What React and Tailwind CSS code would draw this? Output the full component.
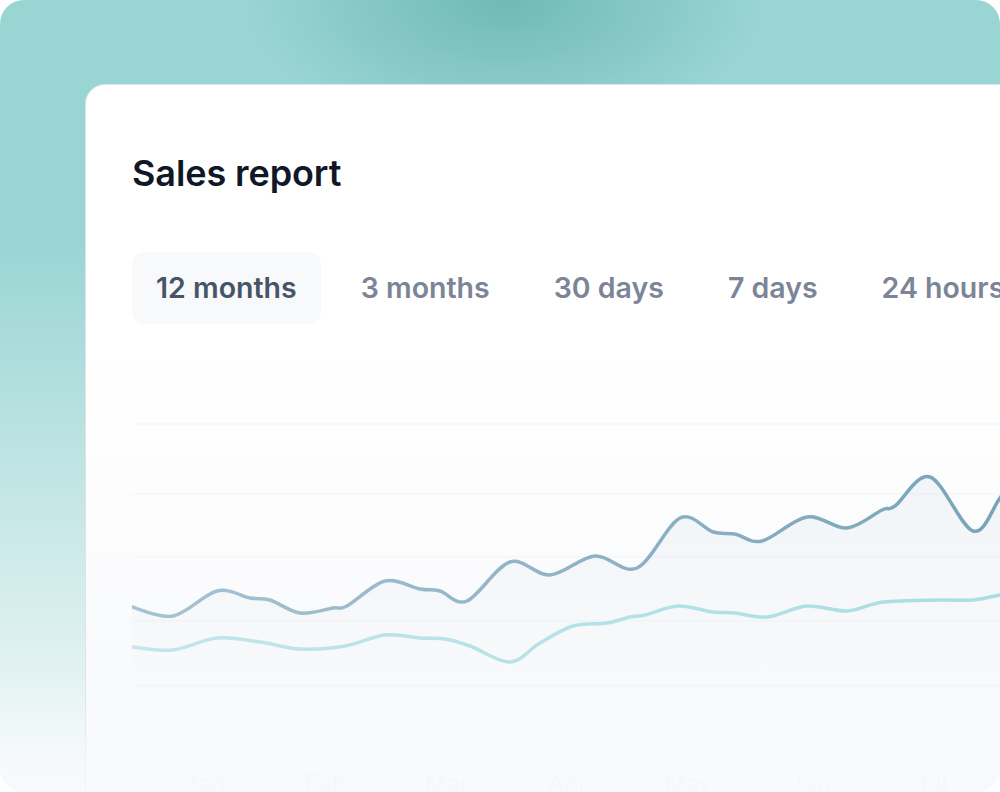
import React from 'react';

const darkPts = [
  [132, 607], [173, 616], [217, 591], [250, 598], [270, 600], [300, 613], [333, 608], [347, 606],
  [385, 581], [420, 589], [440, 591], [467, 601], [510, 562], [550, 575], [595, 556], [637, 568],
  [680, 518], [713, 532], [735, 534], [762, 541], [807, 517], [847, 528], [882, 510], [895, 506],
  [930, 477], [973, 531], [1000, 498], [1020, 470],
];

const lightPts = [
  [132, 647], [173, 650], [217, 638], [260, 642], [300, 649], [345, 646], [385, 635], [420, 638],
  [445, 639], [470, 646], [510, 662], [540, 643], [573, 626], [607, 623], [630, 617], [645, 615],
  [678, 606], [713, 612], [735, 613], [767, 617], [807, 606], [847, 611], [883, 602], [940, 600],
  [973, 600], [1000, 595], [1020, 592],
];

const gridYs = [424, 494, 557, 621, 686, 749];
const tabs = ['12 months', '3 months', '30 days', '7 days', '24 hours'];
const months = ['Jan', 'Feb', 'Mar', 'Apr', 'May', 'Jun', 'Jul'];

// catmull-rom -> cubic bezier
function smooth(pts) {
  let d = `M${pts[0][0]},${pts[0][1]}`;
  for (let i = 0; i < pts.length - 1; i++) {
    const p0 = pts[i - 1] || pts[i];
    const p1 = pts[i];
    const p2 = pts[i + 1];
    const p3 = pts[i + 2] || p2;
    const c1 = [p1[0] + (p2[0] - p0[0]) / 6, p1[1] + (p2[1] - p0[1]) / 6];
    const c2 = [p2[0] - (p3[0] - p1[0]) / 6, p2[1] - (p3[1] - p1[1]) / 6];
    d += ` C${c1[0]},${c1[1]} ${c2[0]},${c2[1]} ${p2[0]},${p2[1]}`;
  }
  return d;
}

function Chart() {
  const dark = smooth(darkPts);
  const light = smooth(lightPts);
  return (
    <svg width="868" height="340" viewBox="132 410 868 340" className="block">
      <defs>
        <linearGradient id="darkStroke" x1="132" y1="0" x2="1000" y2="0" gradientUnits="userSpaceOnUse">
          <stop offset="0" stopColor="#a7c3d2" />
          <stop offset="1" stopColor="#78a4b9" />
        </linearGradient>
        <linearGradient id="lightStroke" x1="132" y1="0" x2="1000" y2="0" gradientUnits="userSpaceOnUse">
          <stop offset="0" stopColor="#c2e6e9" />
          <stop offset="1" stopColor="#a9dee2" />
        </linearGradient>
        <linearGradient id="areaFill" x1="0" y1="470" x2="0" y2="700" gradientUnits="userSpaceOnUse">
          <stop offset="0" stopColor="#7f9fbd" stopOpacity="0.09" />
          <stop offset="1" stopColor="#7f9fbd" stopOpacity="0" />
        </linearGradient>
      </defs>
      {gridYs.map((y) => (
        <line key={y} x1="132" x2="1000" y1={y} y2={y} stroke="#f2f4f7" strokeWidth="1.2" />
      ))}
      <path d={`${dark} L1020,700 L132,700 Z`} fill="url(#areaFill)" />
      <path d={light} fill="none" stroke="url(#lightStroke)" strokeWidth="3.5" strokeLinecap="round" />
      <path d={dark} fill="none" stroke="url(#darkStroke)" strokeWidth="3.5" strokeLinecap="round" />
    </svg>
  );
}

export default function App() {
  return (
    <div className="w-[1000px] h-[792px] bg-white" style={{ fontFamily: 'Inter, "Noto Sans", sans-serif' }}>
      <div className="relative w-full h-full overflow-hidden rounded-3xl bg-[radial-gradient(ellipse_260px_140px_at_505px_0px,rgba(98,176,170,0.75),rgba(98,176,170,0)),linear-gradient(to_bottom,#99d5d3_0%,#99d5d3_30%,#f6fafb_100%)]">
        {/* Card */}
        <div className="ml-[85px] mt-[84px] w-[960px] h-[760px] rounded-tl-[20px] border border-[#dfe2e7] bg-[linear-gradient(to_bottom,#ffffff_0%,#ffffff_35%,#f8f9fb_85%)] pt-[60px] pl-[46px]">
          <h1 className="text-[36px] leading-[56px] font-semibold text-[#101828] tracking-[-0.1px]">Sales report</h1>

          <div className="mt-[51px] flex gap-4 whitespace-nowrap">
            {tabs.map((t, i) => (
              <div
                key={t}
                className={
                  i === 0
                    ? 'px-6 py-4 rounded-[12px] bg-[#f8f9fb] text-[28.5px] leading-[40px] font-semibold text-[#475467]'
                    : 'px-6 py-4 rounded-[12px] text-[28.5px] leading-[40px] font-semibold text-[#7c8597]'
                }
              >
                {t}
              </div>
            ))}
          </div>

          <div className="mt-[86px]">
            <Chart />
          </div>

          <div className="mt-[18px] flex pl-[12px]">
            {months.map((m) => (
              <div key={m} className="w-[121px] text-center text-[24px] leading-[32px] text-[#eceef1]">
                {m}
              </div>
            ))}
          </div>
        </div>

        {/* bottom fade */}
        <div className="absolute left-0 right-0 bottom-0 h-[110px] bg-[linear-gradient(to_bottom,rgba(248,250,251,0),rgba(248,250,251,0.85))]" />
      </div>
    </div>
  );
}
